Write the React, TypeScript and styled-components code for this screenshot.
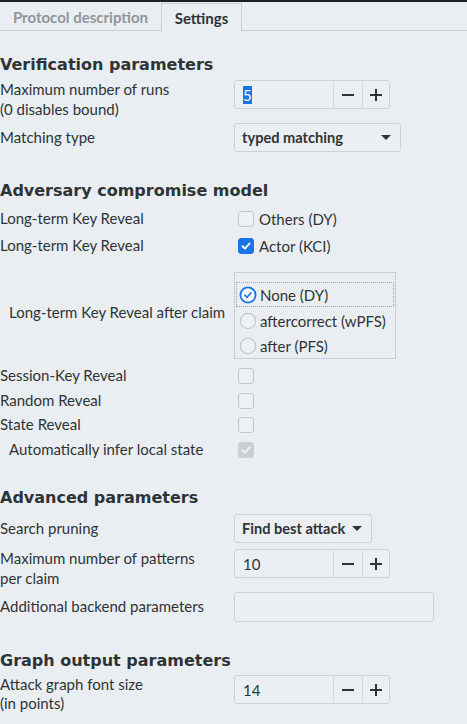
import React from "react";
import styled, { createGlobalStyle } from "styled-components";

const Global = createGlobalStyle`
  html, body { margin: 0; padding: 0; background: #eaeef2; }
  body { font-family: "Lato", "Noto Sans", sans-serif; color: #2e3436; }
  * { box-sizing: border-box; }
`;

const Page = styled.div`
  width: 467px;
  height: 724px;
  overflow: hidden;
  background: #eaeef2;
  border-top: 2px solid #1e1e1e;
  display: flex;
  flex-direction: column;
`;

const TabBar = styled.div`
  display: flex;
  height: 29px;
  border-bottom: 1px solid #c9ced3;
  align-items: stretch;
`;

const Tab = styled.div<{ $active?: boolean }>`
  display: flex;
  align-items: center;
  justify-content: center;
  flex-shrink: 0;
  white-space: nowrap;
  font-size: 15px;
  font-weight: 700;
  color: ${(p) => (p.$active ? "#2e3436" : "#919596")};
  width: ${(p) => (p.$active ? "81px" : "161px")};
  margin-top: 1px;
  ${(p) =>
    p.$active
      ? `border: 1px solid #c9ced3; border-bottom: none; margin-bottom: -1px; background: #eaeef2;`
      : ``}
`;

const Content = styled.div`
  display: flex;
  flex-direction: column;
`;

const Heading = styled.h2<{ $top: number }>`
  margin: ${(p) => p.$top}px 0 0 0;
  height: 22px;
  line-height: 22px;
  font-family: "DejaVu Sans", sans-serif;
  font-weight: 700;
  font-size: 16px;
  color: #2e3436;
`;

const Row = styled.div<{ $top: number; $h: number }>`
  display: grid;
  grid-template-columns: 234px auto;
  margin-top: ${(p) => p.$top}px;
  min-height: ${(p) => p.$h}px;
  align-items: ${(p) => (p.$h > 30 ? "start" : "center")};
`;

const Label = styled.div<{ $indent?: boolean; $center?: boolean; $lh?: number }>`
  font-size: 15px;
  line-height: ${(p) => p.$lh ?? 19.5}px;
  padding-left: ${(p) => (p.$indent ? "9px" : "0")};
  align-self: ${(p) => (p.$center ? "center" : "auto")};
  margin-top: ${(p) => (p.$center ? "-6px" : "0")};
  white-space: nowrap;
`;

const Spin = styled.div`
  display: flex;
  width: 156px;
  height: 29px;
  border: 1px solid #cdd2d7;
  border-radius: 3px;
  background: #ebeef2;
`;

const SpinInput = styled.div`
  flex: 1;
  display: flex;
  align-items: center;
  padding-left: 8px;
  font-size: 15px;
`;

const Selected = styled.span`
  background: #1a73e8;
  color: #fff;
  line-height: 18px;
`;

const SpinBtn = styled.div`
  width: 29px;
  display: flex;
  align-items: center;
  justify-content: center;
  border-left: 1px solid #d6dadf;
  &:last-child { width: 27px; }
`;

const Combo = styled.div<{ $w: number }>`
  width: ${(p) => p.$w}px;
  height: 29px;
  border: 1px solid #cdd2d7;
  border-radius: 3px;
  display: flex;
  align-items: center;
  justify-content: space-between;
  gap: 6px;
  padding: 0 9px 0 7px;
  font-weight: 700;
  font-size: 14.6px;
  white-space: nowrap;
  background: #ebeef2;
`;

const Arrow = styled.span`
  flex-shrink: 0;
  width: 0;
  height: 0;
  border-left: 5px solid transparent;
  border-right: 5px solid transparent;
  border-top: 5px solid #2e3436;
`;

const Entry = styled.div`
  width: 200px;
  height: 30px;
  border: 1px solid #cdd2d7;
  border-radius: 3px;
  background: #ebeef2;
`;

const CheckWrap = styled.div`
  display: flex;
  align-items: center;
  gap: 5px;
  padding-left: 4px;
  font-size: 15px;
`;

const Box = styled.span<{ $state: "off" | "on" | "disabled" }>`
  width: 16px;
  height: 16px;
  border-radius: 3px;
  display: inline-flex;
  align-items: center;
  justify-content: center;
  border: 1px solid
    ${(p) => (p.$state === "on" ? "#1a73e8" : p.$state === "disabled" ? "#cbcfd3" : "#c3c8cd")};
  background: ${(p) => (p.$state === "on" ? "#1a73e8" : p.$state === "disabled" ? "#cbcfd3" : "#eef1f4")};
`;

const RadioFrame = styled.div`
  width: 162px;
  height: 87px;
  border: 1px solid #c9ced3;
  padding: 9px 1px 0 1px;
  display: flex;
  flex-direction: column;
`;

const RadioItem = styled.div<{ $focus?: boolean }>`
  display: flex;
  align-items: center;
  gap: 3px;
  height: 25px;
  padding-left: 2px;
  font-size: 15px;
  border: 1px dotted ${(p) => (p.$focus ? "#9aa0a6" : "transparent")};
  margin-bottom: ${(p) => (p.$focus ? "1px" : "0")};
`;

const Minus = () => (
  <svg width="12" height="12" viewBox="0 0 12 12">
    <rect x="0" y="5" width="12" height="2" fill="#2e3436" />
  </svg>
);
const Plus = () => (
  <svg width="12" height="12" viewBox="0 0 12 12">
    <rect x="0" y="5" width="12" height="2" fill="#2e3436" />
    <rect x="5" y="0" width="2" height="12" fill="#2e3436" />
  </svg>
);

const Check = ({ color }: { color: string }) => (
  <svg width="12" height="12" viewBox="0 0 12 12">
    <path d="M2.5 6.2 L5 8.6 L9.6 3.4" fill="none" stroke={color} strokeWidth="1.9" strokeLinecap="round" strokeLinejoin="round" />
  </svg>
);

const RadioIcon = ({ on }: { on?: boolean }) => (
  <svg width="18" height="18" viewBox="0 0 18 18">
    <circle cx="9" cy="9" r="7.6" fill={on ? "#f4f6f8" : "#eef1f4"} stroke={on ? "#1a73e8" : "#c3c8cd"} strokeWidth={on ? 1.8 : 1.3} />
    {on && <path d="M5.8 9.2 L8 11.3 L12 6.9" fill="none" stroke="#1a73e8" strokeWidth="1.6" strokeLinecap="round" strokeLinejoin="round" />}
  </svg>
);

const SpinBox = ({ value, selected }: { value: string; selected?: boolean }) => (
  <Spin>
    <SpinInput>{selected ? <Selected>{value}</Selected> : value}</SpinInput>
    <SpinBtn><Minus /></SpinBtn>
    <SpinBtn><Plus /></SpinBtn>
  </Spin>
);

const CheckBox = ({ state, label }: { state: "off" | "on" | "disabled"; label?: string }) => (
  <CheckWrap>
    <Box $state={state}>
      {state === "on" && <Check color="#ffffff" />}
      {state === "disabled" && <Check color="#eef0f2" />}
    </Box>
    {label}
  </CheckWrap>
);

export default function App() {
  return (
    <Page>
      <Global />
      <TabBar>
        <Tab>Protocol description</Tab>
        <Tab $active>Settings</Tab>
      </TabBar>
      <Content>
        <Heading $top={23}>Verification parameters</Heading>
        <Row $top={4} $h={40}>
          <Label>Maximum number of runs<br />(0 disables bound)</Label>
          <SpinBox value="5" selected />
        </Row>
        <Row $top={3} $h={29}>
          <Label>Matching type</Label>
          <Combo $w={167}>typed matching<Arrow /></Combo>
        </Row>

        <Heading $top={28}>Adversary compromise model</Heading>
        <Row $top={4} $h={25}>
          <Label>Long-term Key Reveal</Label>
          <CheckBox state="off" label="Others (DY)" />
        </Row>
        <Row $top={2} $h={25}>
          <Label>Long-term Key Reveal</Label>
          <CheckBox state="on" label="Actor (KCI)" />
        </Row>
        <Row $top={14} $h={87}>
          <Label $indent $center>Long-term Key Reveal after claim</Label>
          <RadioFrame>
            <RadioItem $focus><RadioIcon on />None (DY)</RadioItem>
            <RadioItem><RadioIcon />aftercorrect (wPFS)</RadioItem>
            <RadioItem><RadioIcon />after (PFS)</RadioItem>
          </RadioFrame>
        </Row>
        <Row $top={4} $h={25}>
          <Label>Session-Key Reveal</Label>
          <CheckBox state="off" />
        </Row>
        <Row $top={0} $h={25}>
          <Label>Random Reveal</Label>
          <CheckBox state="off" />
        </Row>
        <Row $top={0} $h={24}>
          <Label>State Reveal</Label>
          <CheckBox state="off" />
        </Row>
        <Row $top={0} $h={25}>
          <Label $indent>Automatically infer local state</Label>
          <CheckBox state="disabled" />
        </Row>

        <Heading $top={25}>Advanced parameters</Heading>
        <Row $top={5} $h={28}>
          <Label>Search pruning</Label>
          <Combo $w={138}>Find best attack<Arrow /></Combo>
        </Row>
        <Row $top={6} $h={40}>
          <Label>Maximum number of patterns<br />per claim</Label>
          <SpinBox value="10" />
        </Row>
        <Row $top={3} $h={30}>
          <Label>Additional backend parameters</Label>
          <Entry />
        </Row>

        <Heading $top={28}>Graph output parameters</Heading>
        <Row $top={3} $h={40}>
          <Label $lh={18.5}>Attack graph font size<br />(in points)</Label>
          <SpinBox value="14" />
        </Row>
      </Content>
    </Page>
  );
}
